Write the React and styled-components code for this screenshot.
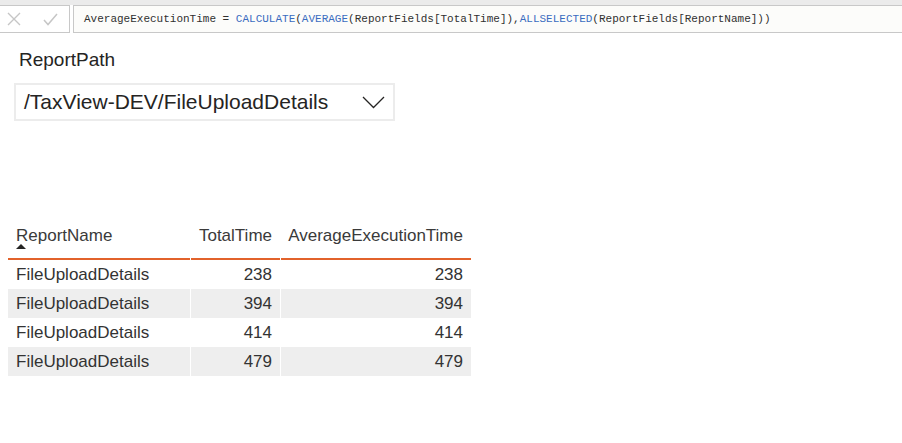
import React from "react";
import styled, { createGlobalStyle } from "styled-components";

const Global = createGlobalStyle`
  html, body { margin: 0; padding: 0; background: #ffffff; }
  body { font-family: "Liberation Sans", Arial, sans-serif; color: #333; }
  * { box-sizing: border-box; }
`;

const Page = styled.div`
  width: 902px;
  height: 443px;
  overflow: hidden;
  background: #fff;
`;

const FormulaBar = styled.div`
  display: flex;
  flex-direction: column;
`;

const TopStrip = styled.div`
  height: 5px;
  background: #ebebeb;
`;

const FormulaRow = styled.div`
  display: flex;
  gap: 3px;
  height: 28px;
`;

const IconBox = styled.div`
  width: 70px;
  flex: none;
  display: flex;
  align-items: center;
  gap: 22px;
  padding-left: 7px;
  border-top: 1px solid #c8c8c8;
  border-bottom: 1px solid #c8c8c8;
  border-right: 1px solid #c8c8c8;
  background: #fff;
`;

const FormulaBox = styled.div`
  flex: 1;
  display: flex;
  align-items: center;
  padding-left: 10px;
  border: 1px solid #c8c8c8;
  border-right: none;
  background: #fcfcfa;
  font-family: "Liberation Mono", "DejaVu Sans Mono", monospace;
  font-size: 11px;
  color: #303030;
  white-space: pre;
`;

const Kw = styled.span`
  color: #3a6cc0;
`;

const Content = styled.div`
  padding: 16px 0 0 0;
`;

const Slicer = styled.div`
  display: flex;
  flex-direction: column;
  align-items: flex-start;
  padding-left: 14px;
`;

const SlicerTitle = styled.div`
  font-size: 19px;
  line-height: 22px;
  color: #252423;
  padding-left: 5px;
`;

const Dropdown = styled.div`
  margin-top: 12px;
  width: 381px;
  height: 38px;
  border: 2px solid #ececec;
  display: flex;
  align-items: center;
  justify-content: space-between;
  padding: 0 8px 0 8px;
`;

const DropdownText = styled.span`
  font-size: 21px;
  line-height: 34px;
  color: #252423;
`;

const Table = styled.div`
  margin-top: 101px;
  margin-left: 8px;
  display: grid;
  grid-template-columns: 182px 89px 190px;
  column-gap: 1px;
  width: 463px;
`;

const HeadCell = styled.div`
  height: 38px;
  padding: 4px 8px 0 8px;
  border-bottom: 2px solid #e2622b;
  font-size: 17px;
  line-height: 20px;
  color: #3a3a3a;
  text-align: ${(p) => (p.$right ? "right" : "left")};
  display: flex;
  flex-direction: column;
  align-items: ${(p) => (p.$right ? "flex-end" : "flex-start")};
`;

const SortArrow = styled.span`
  display: block;
  width: 0;
  height: 0;
  margin-top: -2px;
  border-left: 5.5px solid transparent;
  border-right: 5.5px solid transparent;
  border-bottom: 5px solid #252423;
`;

const Cell = styled.div`
  height: 29px;
  padding: 0 8px;
  font-size: 17px;
  line-height: 29px;
  color: #333;
  background: ${(p) => (p.$alt ? "#eeeeee" : "#ffffff")};
  text-align: ${(p) => (p.$right ? "right" : "left")};
  white-space: nowrap;
`;

const XIcon = () => (
  <svg width="14" height="14" viewBox="0 0 14 14">
    <path d="M1 1 L13 13 M13 1 L1 13" stroke="#c6c6c6" strokeWidth="1.4" fill="none" />
  </svg>
);

const CheckIcon = () => (
  <svg width="15" height="13" viewBox="0 0 15 13">
    <path d="M1 7 L5 11.5 L14 1" stroke="#c6c6c6" strokeWidth="1.5" fill="none" />
  </svg>
);

const Chevron = () => (
  <svg width="23" height="13" viewBox="0 0 23 13">
    <path d="M1 1 L11.5 11.5 L22 1" stroke="#252423" strokeWidth="1.3" fill="none" />
  </svg>
);

const rows = [
  ["FileUploadDetails", "238", "238"],
  ["FileUploadDetails", "394", "394"],
  ["FileUploadDetails", "414", "414"],
  ["FileUploadDetails", "479", "479"],
];

export default function App() {
  return (
    <Page>
      <Global />
      <FormulaBar>
        <TopStrip />
        <FormulaRow>
          <IconBox>
            <XIcon />
            <CheckIcon />
          </IconBox>
          <FormulaBox>
            {"AverageExecutionTime = "}
            <Kw>CALCULATE</Kw>(<Kw>AVERAGE</Kw>
            {"(ReportFields[TotalTime]),"}
            <Kw>ALLSELECTED</Kw>
            {"(ReportFields[ReportName]))"}
          </FormulaBox>
        </FormulaRow>
      </FormulaBar>
      <Content>
        <Slicer>
          <SlicerTitle>ReportPath</SlicerTitle>
          <Dropdown>
            <DropdownText>/TaxView-DEV/FileUploadDetails</DropdownText>
            <Chevron />
          </Dropdown>
        </Slicer>
        <Table>
          <HeadCell>
            ReportName
            <SortArrow />
          </HeadCell>
          <HeadCell $right>TotalTime</HeadCell>
          <HeadCell $right>AverageExecutionTime</HeadCell>
          {rows.map((r, i) => (
            <React.Fragment key={i}>
              <Cell $alt={i % 2 === 1}>{r[0]}</Cell>
              <Cell $alt={i % 2 === 1} $right>{r[1]}</Cell>
              <Cell $alt={i % 2 === 1} $right>{r[2]}</Cell>
            </React.Fragment>
          ))}
        </Table>
      </Content>
    </Page>
  );
}
